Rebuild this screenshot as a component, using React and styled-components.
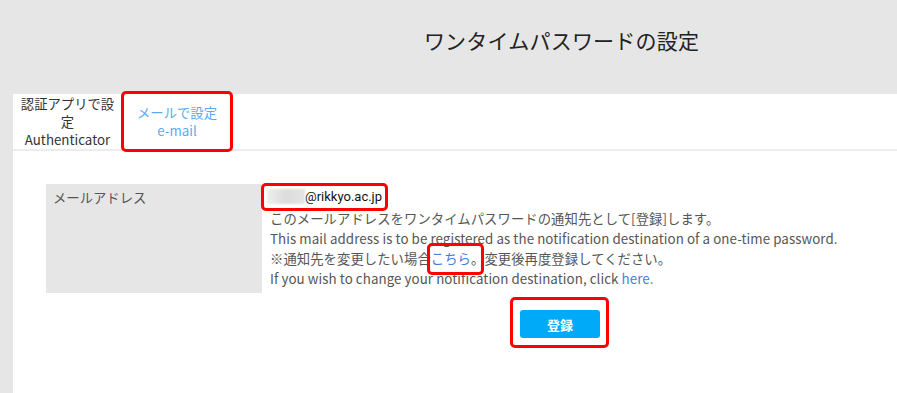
import styled, { createGlobalStyle } from "styled-components";

const GlobalStyle = createGlobalStyle`
  html, body {
    margin: 0;
    padding: 0;
    background: #e6e6e6;
    font-family: "Noto Sans CJK JP", "Noto Sans", sans-serif;
    overflow: hidden;
  }
`;

const App = () => {
  return (
    <>
      <GlobalStyle />
      <Header>
        <Title>ワンタイムパスワードの設定</Title>
      </Header>
      <Panel>
        <Tabs>
          <Tab>
            認証アプリで設定
            <br />
            Authenticator
          </Tab>
          <Tab $active $mark>
            メールで設定
            <br />
            e-mail
          </Tab>
        </Tabs>
        <Content>
          <FormRow>
            <Label>メールアドレス</Label>
            <Value>
              <EmailLine>
                <Email>
                  <Blur />
                  @rikkyo.ac.jp
                </Email>
              </EmailLine>
              <Note>
                このメールアドレスをワンタイムパスワードの通知先として[登録]します。
              </Note>
              <Note>
                This mail address is to be registered as the notification
                destination of a one-time password.
              </Note>
              <Note>
                ※通知先を変更したい場合<LinkMarked>こちら</LinkMarked>。変更後再度登録してください。
              </Note>
              <Note>
                If you wish to change your notification destination, click{" "}
                <Link>here.</Link>
              </Note>
            </Value>
          </FormRow>
          <ButtonRow>
            <SubmitButton>登録</SubmitButton>
          </ButtonRow>
        </Content>
      </Panel>
    </>
  );
};

export default App;

const redBox = `
  content: "";
  position: absolute;
  border: 3px solid #ff0000;
  border-radius: 5px;
  pointer-events: none;
`;

const Header = styled.header`
  height: 94px;
  display: flex;
  justify-content: center;
  padding-left: 226px;
  box-sizing: border-box;
`;

const Title = styled.h1`
  margin: 0;
  padding-top: 25px;
  font-size: 21px;
  line-height: 30px;
  font-weight: 400;
  color: #222;
  letter-spacing: 0.2px;
`;

const Panel = styled.main`
  margin-left: 13px;
  background: #fff;
  min-height: calc(100vh - 94px);
`;

const Tabs = styled.nav`
  display: flex;
  height: 55px;
  border-bottom: 2px solid #ececec;
`;

const Tab = styled.div`
  position: relative;
  display: flex;
  align-items: center;
  justify-content: center;
  width: ${(p) => (p.$active ? "110px" : "97px")};
  padding: 0 6px;
  box-sizing: ${(p) => (p.$active ? "border-box" : "content-box")};
  text-align: center;
  font-size: 13.33px;
  line-height: 18px;
  color: ${(p) => (p.$active ? "#5aaaf0" : "#333")};

  ${(p) =>
    p.$mark &&
    `
    &::after {
      ${redBox}
      top: -3px;
      bottom: -3px;
      left: -1px;
      right: -1px;
    }
  `}
`;

const Content = styled.section`
  padding: 33px 0 0 33px;
`;

const FormRow = styled.div`
  display: flex;
  align-items: stretch;
`;

const Label = styled.div`
  width: 216px;
  min-height: 109px;
  box-sizing: border-box;
  padding: 4px 7px;
  background: #e6e6e6;
  font-size: 13.33px;
  line-height: 20px;
  color: #555;
`;

const Value = styled.div`
  padding-left: 8px;
`;

const EmailLine = styled.div`
  height: 24px;
  margin-bottom: 1px;
  display: flex;
  align-items: center;
`;

const Email = styled.span`
  position: relative;
  display: inline-flex;
  align-items: center;
  margin-left: -3px;
  font-family: Roboto, "Liberation Sans", sans-serif;
  font-size: 13px;
  color: #111;

  &::after {
    ${redBox}
    top: -6px;
    bottom: -7px;
    left: -6px;
    right: -6px;
  }
`;

const Blur = styled.span`
  display: inline-block;
  width: 38px;
  height: 15px;
  background: linear-gradient(90deg, #eeeeee, #dcdcdc 50%, #e4e4e4);
  filter: blur(1px);
`;

const Note = styled.p`
  margin: 0;
  font-size: 13.33px;
  line-height: 20px;
  color: #555;
  letter-spacing: 0.07px;
  white-space: nowrap;
`;

const Link = styled.a`
  color: #3f7fe0;
  text-decoration: none;
`;

const LinkMarked = styled(Link)`
  position: relative;

  &::after {
    ${redBox}
    top: -6px;
    bottom: -7px;
    left: -4px;
    right: -13px;
  }
`;

const ButtonRow = styled.div`
  padding: 17px 0 0 474px;
`;

const SubmitButton = styled.button`
  position: relative;
  width: 80px;
  height: 28px;
  border: none;
  border-radius: 3px;
  background: #00aaf8;
  color: #fff;
  font-family: "Noto Sans CJK JP", sans-serif;
  font-size: 13px;
  font-weight: 700;

  &::after {
    ${redBox}
    top: -13px;
    bottom: -10px;
    left: -10px;
    right: -9px;
  }
`;
